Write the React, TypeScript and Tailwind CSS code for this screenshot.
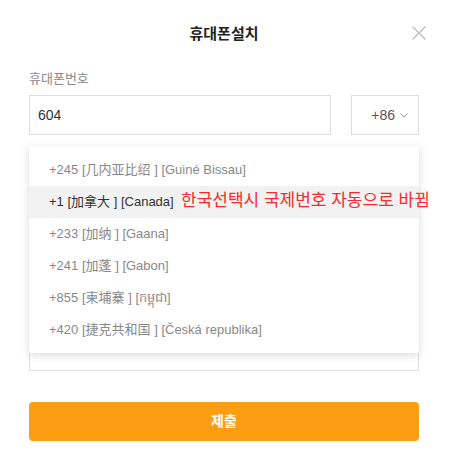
const font = { fontFamily: '"Liberation Sans", "Noto Sans CJK KR", "Noto Sans CJK SC", sans-serif' };

export default function App() {
  const countries = [
    { code: "+245", cn: "几内亚比绍", local: "Guiné Bissau" },
    { code: "+1", cn: "加拿大", local: "Canada", active: true },
    { code: "+233", cn: "加纳", local: "Gaana" },
    { code: "+241", cn: "加蓬", local: "Gabon" },
    { code: "+855", cn: "柬埔寨", local: "កម្ពុជា" },
    { code: "+420", cn: "捷克共和国", local: "Česká republika" },
  ];

  return (
    <div className="w-[449px] h-[471px] bg-white pl-[29px] pr-[30px] pt-[24px]" style={font}>
      <div className="relative h-5 flex items-center justify-center">
        <h1 className="text-[15px] font-bold text-[#222] leading-5">휴대폰설치</h1>
        <button className="absolute right-[-8px] top-[1px] w-4 h-4 text-[#bbb]">
          <svg viewBox="0 0 16 16" width="16" height="16" fill="none" stroke="currentColor" strokeWidth="1.4">
            <path d="M1.5 1.5 L14.5 14.5 M14.5 1.5 L1.5 14.5" />
          </svg>
        </button>
      </div>

      <div className="relative">
        <div className="mt-[27px] text-[13px] leading-4 text-[#888]">휴대폰번호</div>

        <div className="mt-[8px] flex items-center">
          <div className="w-[302px] h-10 border border-[#ddd] flex items-center px-2 text-[14px] text-[#333]">604</div>
          <div className="ml-auto w-[68px] h-10 border border-[#ddd] flex items-center justify-end pr-[10px] gap-[5px] text-[14px] text-[#555]">
            <span>+86</span>
            <svg viewBox="0 0 8 5" width="8" height="5" fill="none" stroke="#999" strokeWidth="1">
              <path d="M0.5 0.5 L4 4 L7.5 0.5" />
            </svg>
          </div>
        </div>

        <div className="mt-[196px] h-10 border border-[#ddd]" />

        <button className="mt-[31px] w-full h-[39px] rounded-[4px] bg-[#fb9e14] text-white text-[14px] font-bold">제출</button>

        <div className="absolute left-0 top-[75px] w-[390px] h-[207px] bg-white py-2 shadow-[0_2px_8px_rgba(0,0,0,0.15)]">
          {countries.map((c) => (
            <div
              key={c.code}
              className={`relative h-8 flex items-center pl-5 text-[13px] whitespace-nowrap ${c.active ? "bg-[#f2f2f2] text-[#333]" : "text-[#888]"}`}
            >
              {c.code} [{c.cn} ] [{c.local}]
              {c.active && (
                <span className="absolute left-[152px] top-[5px] text-[17px] leading-5 text-[#f52c2c]">한국선택시 국제번호 자동으로 바뀜</span>
              )}
            </div>
          ))}
        </div>
      </div>
    </div>
  );
}
